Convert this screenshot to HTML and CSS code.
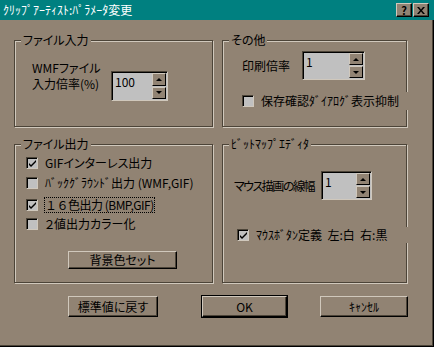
FILE: index.html
```html
<!DOCTYPE html>
<html lang="ja">
<head>
    <meta charset="UTF-8">
    <title>ｸﾘｯﾌﾟｱｰﾃｨｽﾄ:ﾊﾟﾗﾒｰﾀ変更</title>
    <link rel="stylesheet" href="styles.css">
</head>
<body>
    <div class="window">
        <div class="titlebar">
            <span class="title">ｸﾘｯﾌﾟｱｰﾃｨｽﾄ:ﾊﾟﾗﾒｰﾀ変更</span>
            <div class="cap-btns">
                <span class="cap-btn cap-help">?</span>
                <span class="cap-btn">
                    <svg width="8" height="7" viewBox="0 0 8 7"><path d="M0 0h2l2 2.5 2-2.5h2l-3 3.5 3 3.5h-2l-2-2.5-2 2.5h-2l3-3.5z" fill="#000"/></svg>
                </span>
            </div>
        </div>

        <div class="client">
            <div class="groups">
                <!-- file input -->
                <div class="group g-input">
                    <span class="group-title">ファイル入力</span>
                    <div class="wmf-row">
                        <div class="wmf-label">
                            <div>WMFファイル</div>
                            <div>入力倍率(%)</div>
                        </div>
                        <div class="spin spin-wmf">
                            <span class="spin-value">100</span>
                            <span class="spin-btns">
                                <span class="spin-btn"><i class="arrow-up"></i></span>
                                <span class="spin-btn"><i class="arrow-down"></i></span>
                            </span>
                        </div>
                    </div>
                </div>

                <!-- other -->
                <div class="group g-other">
                    <span class="group-title">その他</span>
                    <div class="field-row print-row">
                        <span class="print-label">印刷倍率</span>
                        <div class="spin spin-print">
                            <span class="spin-value">1</span>
                            <span class="spin-btns">
                                <span class="spin-btn"><i class="arrow-up"></i></span>
                                <span class="spin-btn"><i class="arrow-down"></i></span>
                            </span>
                        </div>
                    </div>
                    <div class="check-row wide confirm-row">
                        <span class="check"></span>
                        <span class="check-label">保存確認ﾀﾞｲｱﾛｸﾞ表示抑制</span>
                    </div>
                </div>

                <!-- file output -->
                <div class="group g-output">
                    <span class="group-title">ファイル出力</span>
                    <div class="check-row out-1">
                        <span class="check checked"><svg width="9" height="9" viewBox="0 0 9 9"><path d="M1 4l2 2 5-5v2l-5 5-2-2z" fill="#000"/></svg></span>
                        <span class="check-label">GIFインターレス出力</span>
                    </div>
                    <div class="check-row out-2">
                        <span class="check"></span>
                        <span class="check-label">ﾊﾞｯｸｸﾞﾗｳﾝﾄﾞ出力 (WMF,GIF)</span>
                    </div>
                    <div class="check-row out-3">
                        <span class="check checked"><svg width="9" height="9" viewBox="0 0 9 9"><path d="M1 4l2 2 5-5v2l-5 5-2-2z" fill="#000"/></svg></span>
                        <span class="check-label focus">１６色出力 (BMP,GIF)</span>
                    </div>
                    <div class="check-row out-4">
                        <span class="check"></span>
                        <span class="check-label">２値出力カラー化</span>
                    </div>
                    <button class="btn btn-bgcolor">背景色セット</button>
                </div>

                <!-- bitmap editor -->
                <div class="group g-bitmap">
                    <span class="group-title">ﾋﾞｯﾄﾏｯﾌﾟｴﾃﾞｨﾀ</span>
                    <div class="field-row line-row">
                        <span class="line-label">マウス描画の線幅</span>
                        <div class="spin spin-line">
                            <span class="spin-value">1</span>
                            <span class="spin-btns">
                                <span class="spin-btn"><i class="arrow-up"></i></span>
                                <span class="spin-btn"><i class="arrow-down"></i></span>
                            </span>
                        </div>
                    </div>
                    <div class="check-row wide mouse-row">
                        <span class="check checked"><svg width="9" height="9" viewBox="0 0 9 9"><path d="M1 4l2 2 5-5v2l-5 5-2-2z" fill="#000"/></svg></span>
                        <span class="check-label">ﾏｳｽﾎﾞﾀﾝ定義&nbsp; 左:白&nbsp; 右:黒</span>
                    </div>
                </div>
            </div>

            <div class="actions">
                <button class="btn btn-reset">標準値に戻す</button>
                <button class="btn btn-ok">OK</button>
                <button class="btn btn-cancel">ｷｬﾝｾﾙ</button>
            </div>
        </div>
    </div>
</body>
</html>
```

FILE: styles.css
```css
body {
    margin: 0;
    font-family: "Noto Sans CJK JP", "DejaVu Sans", sans-serif;
    font-size: 12px;
    line-height: 14px;
    color: #000;
    background-color: #918373;
    white-space: nowrap;
}
.window {
    width: 434px;
    height: 347px;
    display: flex;
    flex-direction: column;
}
.titlebar {
    height: 20px;
    flex: none;
    background-color: #008080;
    display: flex;
    align-items: center;
    justify-content: space-between;
    padding: 0 5px 0 3px;
}
.title {
    color: #fff;
}
.cap-btns {
    display: flex;
    gap: 1px;
}
.cap-btn {
    width: 16px;
    height: 14px;
    box-sizing: border-box;
    background-color: #918373;
    border: 1px solid;
    border-color: #d0c8bc #000 #000 #d0c8bc;
    box-shadow: inset -1px -1px #4c4438;
    display: flex;
    align-items: center;
    justify-content: center;
    font-weight: bold;
    font-size: 11px;
    line-height: 12px;
}
.client {
    flex: 1;
    padding: 20px 0 0 14px;
    border-right: 1px solid #000;
    border-bottom: 1px solid #000;
    box-shadow: inset -1px -1px #4c4438;
    font-feature-settings: "palt";
}
.groups {
    display: grid;
    grid-template-columns: 199px 185px;
    grid-template-rows: 87px 139px;
    column-gap: 9px;
    row-gap: 17px;
}
.group {
    position: relative;
    box-sizing: border-box;
    border: 1px solid #4c4438;
    box-shadow: inset 1px 1px #d0c8bc, 1px 1px #d0c8bc;
}
.group-title {
    position: absolute;
    top: -8px;
    left: 6px;
    padding: 0 2px;
    background-color: #918373;
}

/* file input */
.g-input {
    padding: 19px 0 0 17px;
}
.wmf-row {
    display: flex;
    align-items: flex-start;
}
.wmf-label {
    width: 79px;
    line-height: 16px;
}
.spin-wmf {
    margin-top: 11px;
}

/* spin control */
.spin {
    display: flex;
    box-sizing: border-box;
    height: 29px;
    border: 1px solid;
    border-color: #4c4438 #d0c8bc #d0c8bc #4c4438;
    box-shadow: inset 1px 1px #000;
    background-color: #c0c0c0;
}
.spin-wmf { width: 57px; height: 30px; }
.spin-print { width: 63px; }
.spin-line { width: 51px; }
.spin-value {
    flex: 1;
    padding: 3px 0 0 3px;
}
.spin-btns {
    width: 14px;
    display: flex;
    flex-direction: column;
    gap: 1px;
    margin: 1px 1px 1px 0;
}
.spin-btn {
    flex: 1;
    background-color: #918373;
    border: 1px solid;
    border-color: #d0c8bc #000 #000 #d0c8bc;
    display: flex;
    align-items: center;
    justify-content: center;
}
.arrow-up,
.arrow-down {
    width: 0;
    height: 0;
    border-left: 3px solid transparent;
    border-right: 3px solid transparent;
}
.arrow-up { border-bottom: 3px solid #000; }
.arrow-down { border-top: 3px solid #000; }

/* rows */
.field-row {
    display: flex;
    align-items: center;
}
.g-other {
    padding: 10px 0 0 19px;
}
.print-label {
    width: 60px;
}
.check-row {
    display: flex;
    align-items: center;
    height: 18px;
}
.check-row.wide {
    position: relative;
    margin-right: -3px;
    background-color: #918373;
}
.confirm-row {
    margin-top: 12px;
}
.check {
    width: 12px;
    height: 12px;
    flex: none;
    box-sizing: border-box;
    border: 1px solid;
    border-color: #4c4438 #d0c8bc #d0c8bc #4c4438;
    box-shadow: inset 1px 1px #000;
    background-color: #c0c0c0;
    display: flex;
    align-items: center;
    justify-content: center;
    padding: 1px 0 0 1px;
    margin-right: 7px;
}
.check svg {
    display: block;
}
.check-label.focus {
    outline: 1px dotted #000;
    outline-offset: 0;
    font-feature-settings: normal;
    letter-spacing: -0.5px;
}

/* file output */
.g-output {
    padding: 9px 0 0 11px;
}
.out-2 { margin-top: 2px; }
.out-3 { margin-top: 4px; }
.out-4 { margin-top: 1px; }

.btn {
    box-sizing: border-box;
    height: 21px;
    padding: 0;
    font: inherit;
    color: #000;
    background-color: #918373;
    border: 1px solid;
    border-color: #d0c8bc #000 #000 #d0c8bc;
    box-shadow: inset -1px -1px #4c4438;
}
.btn-bgcolor {
    display: block;
    width: 109px;
    height: 18px;
    margin: 18px 0 0 42px;
}

/* bitmap editor */
.g-bitmap {
    padding: 26px 0 0 11px;
}
.line-label {
    width: 87px;
    letter-spacing: -1.5px;
}
.mouse-row {
    margin: 27px -3px 0 3px;
    height: 16px;
}

/* bottom buttons */
.actions {
    display: flex;
    margin-top: 13px;
    padding-left: 54px;
}
.btn-reset { width: 90px; }
.btn-ok {
    width: 85px;
    margin-left: 44px;
    box-shadow: 0 0 0 1px #000, inset -1px -1px #4c4438;
}
.btn-cancel {
    width: 88px;
    margin-left: 33px;
}
```
